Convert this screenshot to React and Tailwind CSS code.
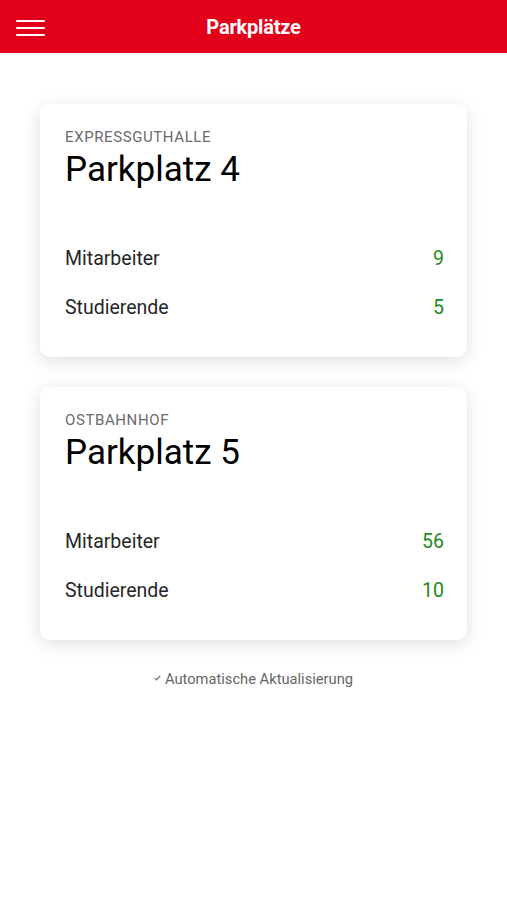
export default function App() {
  const lots = [
    { area: "EXPRESSGUTHALLE", name: "Parkplatz 4", staff: 9, students: 5 },
    { area: "OSTBAHNHOF", name: "Parkplatz 5", staff: 56, students: 10 },
  ];
  return (
    <div className="min-h-[900px] bg-white" style={{ fontFamily: "Roboto, 'Noto Sans', sans-serif" }}>
      <header className="relative flex h-[53px] items-center justify-center bg-[#e2001a]">
        <div className="absolute left-4 top-[20px] flex w-[29px] flex-col gap-[5px]">
          <span className="block h-[2px] rounded-full bg-white" />
          <span className="block h-[2px] rounded-full bg-white" />
          <span className="block h-[2px] rounded-full bg-white" />
        </div>
        <h1 className="text-[20px] font-bold tracking-[-0.2px] text-white">Parkplätze</h1>
      </header>
      <main className="flex flex-col gap-[30px] px-10 pt-[51px]">
        {lots.map((l) => (
          <div key={l.name} className="rounded-[10px] bg-white pb-[25px] pl-[25px] pr-[23px] pt-6 shadow-[0_4px_18px_rgba(0,0,0,0.13)]">
            <div className="text-[15px] leading-[18px] tracking-[0.6px] text-[#6b6b6b]">{l.area}</div>
            <div className="mt-[5px] text-[35px] leading-[38px] text-black">{l.name}</div>
            <div className="mt-[45px]">
              <div className="flex h-[49px] items-center justify-between text-[19.5px]">
                <span className="text-[#262626]">Mitarbeiter</span>
                <span className="text-[#1d8a1d]">{l.staff}</span>
              </div>
              <div className="flex h-[49px] items-center justify-between text-[19.5px]">
                <span className="text-[#262626]">Studierende</span>
                <span className="text-[#1d8a1d]">{l.students}</span>
              </div>
            </div>
          </div>
        ))}
        <div className="-mt-[2px] flex items-center justify-center gap-[4px] text-[14.7px] text-[#666]">
          <svg width="7" height="6" viewBox="0 0 7 6" className="mb-[3px]">
            <path d="M0.8 3.2 L2.6 4.8 L6.2 0.8" fill="none" stroke="#777" strokeWidth="1.3" />
          </svg>
          <span>Automatische Aktualisierung</span>
        </div>
      </main>
    </div>
  );
}
